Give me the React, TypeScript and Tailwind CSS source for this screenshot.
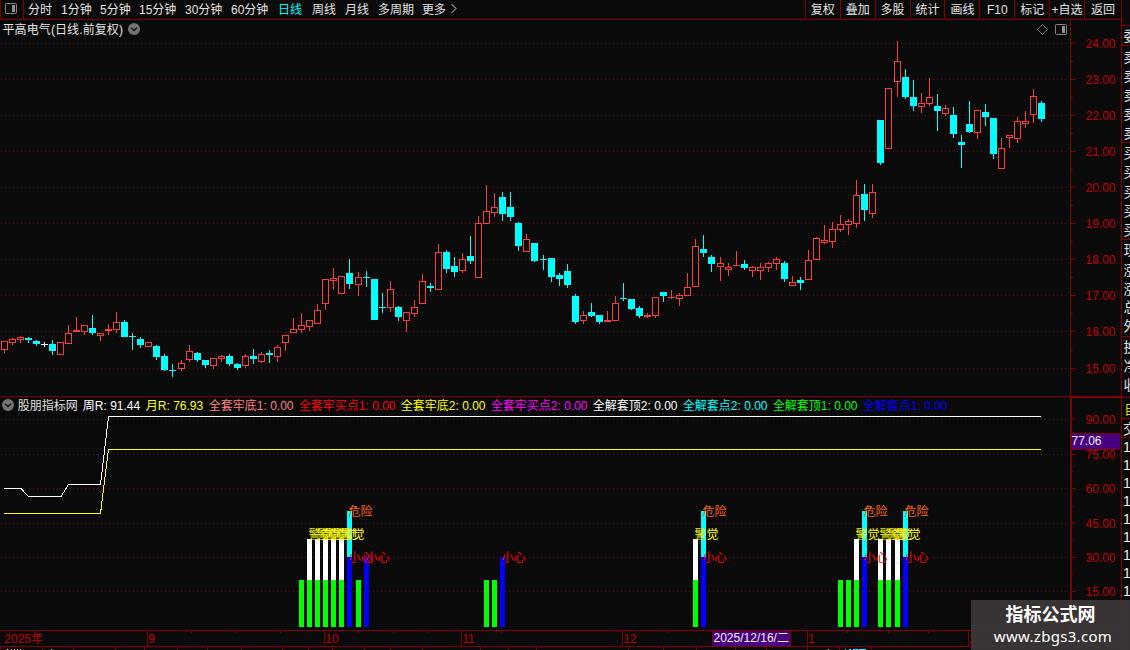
import React from "react";

type Kind = "r" | "c" | "w";
type Candle = [number, number, number, number, number, Kind];

// x centre, high, body top, body bottom, low, kind (r = rising, c = falling, w = flat)
const candles: Candle[] = [
  [4, 341, 341, 350, 353, "r"], [12, 338, 339, 343, 345, "r"], [20, 336, 337, 340, 343, "r"],
  [28, 337, 338, 340, 343, "c"], [36, 340, 341, 344, 346, "c"], [44, 342, 344, 345, 347, "w"],
  [52, 340, 344, 351, 355, "c"], [60, 342, 342, 355, 355, "r"], [68, 325, 333, 344, 344, "r"],
  [76, 317, 330, 332, 332, "r"], [84, 325, 325, 332, 335, "r"], [92, 315, 328, 333, 335, "c"],
  [100, 333, 333, 336, 341, "r"], [108, 324, 329, 331, 335, "r"], [116, 312, 322, 330, 333, "r"],
  [124, 320, 322, 337, 337, "c"], [132, 333, 336, 337, 350, "c"], [140, 337, 339, 345, 348, "c"],
  [148, 342, 342, 347, 347, "r"], [156, 345, 346, 357, 360, "c"], [164, 354, 356, 370, 371, "c"],
  [172, 364, 370, 371, 377, "c"], [181, 360, 363, 369, 371, "r"], [189, 345, 351, 360, 362, "r"],
  [197, 352, 353, 360, 362, "c"], [205, 360, 360, 365, 368, "c"], [213, 358, 358, 366, 369, "r"],
  [221, 355, 356, 359, 362, "r"], [229, 354, 356, 364, 366, "c"], [237, 363, 364, 368, 370, "c"],
  [245, 354, 356, 366, 368, "r"], [253, 349, 356, 359, 364, "c"], [261, 352, 354, 362, 363, "r"],
  [269, 350, 353, 355, 363, "c"], [277, 345, 347, 357, 362, "r"], [285, 335, 335, 343, 351, "r"],
  [293, 318, 329, 333, 333, "r"], [301, 313, 325, 330, 333, "r"], [309, 320, 320, 327, 331, "r"],
  [317, 304, 310, 324, 324, "r"], [325, 279, 279, 304, 310, "r"], [333, 268, 278, 281, 290, "r"],
  [341, 276, 276, 294, 294, "r"], [349, 259, 273, 284, 289, "c"], [358, 272, 277, 285, 296, "r"],
  [366, 271, 277, 278, 287, "c"], [374, 279, 279, 320, 320, "c"], [382, 293, 307, 308, 313, "c"],
  [390, 281, 289, 308, 312, "r"], [398, 306, 307, 317, 321, "c"], [406, 312, 312, 321, 332, "r"],
  [414, 300, 307, 314, 317, "r"], [422, 274, 281, 304, 304, "r"], [430, 283, 286, 288, 292, "c"],
  [438, 244, 252, 290, 290, "r"], [446, 250, 252, 269, 273, "c"], [454, 257, 266, 272, 277, "c"],
  [462, 253, 259, 271, 273, "r"], [470, 236, 256, 261, 264, "c"], [478, 216, 223, 278, 278, "r"],
  [486, 185, 211, 224, 224, "r"], [494, 193, 207, 213, 217, "r"], [502, 192, 197, 214, 221, "c"],
  [510, 192, 207, 217, 221, "c"], [518, 222, 223, 246, 251, "c"], [526, 234, 239, 252, 252, "r"],
  [534, 243, 243, 261, 262, "c"], [543, 255, 259, 260, 270, "c"], [551, 258, 258, 277, 282, "c"],
  [559, 273, 275, 279, 286, "c"], [567, 264, 271, 285, 288, "c"], [575, 294, 296, 322, 324, "c"],
  [583, 311, 315, 321, 324, "r"], [591, 303, 312, 316, 317, "c"], [599, 315, 315, 322, 324, "c"],
  [607, 311, 320, 322, 322, "r"], [615, 296, 303, 321, 321, "r"], [623, 283, 298, 299, 301, "c"],
  [631, 299, 299, 309, 310, "c"], [639, 306, 308, 316, 318, "c"], [647, 313, 315, 317, 318, "r"],
  [655, 297, 297, 316, 318, "r"], [663, 292, 292, 296, 302, "c"], [671, 290, 297, 298, 299, "r"],
  [679, 293, 295, 299, 306, "r"], [687, 273, 287, 296, 296, "r"], [695, 239, 246, 287, 287, "r"],
  [703, 235, 249, 253, 257, "c"], [711, 255, 257, 264, 272, "c"], [720, 257, 263, 267, 281, "r"],
  [728, 263, 267, 270, 276, "r"], [736, 251, 265, 266, 266, "r"], [744, 260, 264, 268, 270, "c"],
  [752, 266, 267, 271, 277, "r"], [760, 263, 267, 271, 280, "r"], [768, 262, 263, 268, 272, "r"],
  [776, 257, 259, 264, 270, "r"], [784, 261, 263, 279, 282, "c"], [792, 276, 282, 286, 286, "r"],
  [800, 277, 280, 283, 290, "c"], [808, 250, 260, 280, 280, "r"], [816, 237, 238, 260, 260, "r"],
  [824, 225, 240, 243, 244, "r"], [832, 222, 229, 242, 248, "r"], [840, 215, 224, 230, 232, "r"],
  [848, 219, 221, 225, 235, "r"], [856, 180, 195, 224, 228, "r"], [864, 184, 194, 210, 221, "c"],
  [872, 184, 192, 214, 218, "r"], [880, 120, 120, 163, 165, "c"], [888, 88, 88, 149, 149, "r"],
  [897, 41, 61, 82, 97, "r"], [905, 69, 77, 97, 99, "c"], [913, 80, 97, 106, 111, "c"],
  [921, 93, 103, 107, 113, "r"], [929, 78, 97, 104, 106, "r"], [937, 94, 106, 111, 131, "c"],
  [945, 105, 108, 114, 116, "r"], [953, 107, 115, 134, 138, "c"], [961, 135, 142, 145, 168, "c"],
  [969, 101, 124, 132, 133, "c"], [977, 110, 110, 133, 139, "r"], [985, 104, 112, 117, 126, "c"],
  [993, 118, 118, 154, 159, "c"], [1001, 138, 148, 169, 169, "r"], [1009, 135, 135, 138, 148, "r"],
  [1017, 117, 121, 139, 143, "r"], [1025, 111, 121, 124, 128, "r"], [1033, 89, 96, 115, 123, "r"],
  [1041, 101, 103, 119, 122, "c"],
];

const candleColor: Record<Kind, string> = { r: "#ff3c3c", c: "#00ffff", w: "#ffffff" };

const priceTicks: [number, string][] = [
  [43, "24.00"], [79, "23.00"], [115, "22.00"], [151, "21.00"], [187, "20.00"],
  [223, "19.00"], [259, "18.00"], [295, "17.00"], [331, "16.00"], [368, "15.00"],
];
const halfTicks = [61, 97, 133, 169, 205, 241, 277, 313, 350];

const indicatorTicks: [number, string][] = [
  [419, "90.00"], [454, "75.00"], [488, "60.00"], [523, "45.00"], [557, "30.00"], [591, "15.00"],
];

const LINE = "#800000";
const LABEL = "#c00000";

const periods: [string, string][] = [
  ["分时", "w-[33px]"], ["1分钟", "w-[39px]"], ["5分钟", "w-[39px]"], ["15分钟", "w-[46px]"],
  ["30分钟", "w-[46px]"], ["60分钟", "w-[47px]"], ["日线", "w-[34px] text-[#00ffff]"],
  ["周线", "w-[33px]"], ["月线", "w-[33px]"], ["多周期", "w-[44px]"], ["更多", "w-[28px]"],
];

const actions = ["复权", "叠加", "多股", "统计", "画线", "F10", "标记", "+自选"];

const legend: [string, string][] = [
  ["股朋指标网", "w-[65px] text-[#e0e0e0]"],
  ["周R: 91.44", "w-[63px] text-white"],
  ["月R: 76.93", "w-[63px] text-[#ffff00]"],
  ["全套牢底1: 0.00", "w-[90px] text-[#ff8080]"],
  ["全套牢买点1: 0.00", "w-[102px] text-[#ff0000]"],
  ["全套牢底2: 0.00", "w-[90px] text-[#ffff00]"],
  ["全套牢买点2: 0.00", "w-[102px] text-[#ff00ff]"],
  ["全解套顶2: 0.00", "w-[90px] text-white"],
  ["全解套点2: 0.00", "w-[90px] text-[#00ffff]"],
  ["全解套顶1: 0.00", "w-[90px] text-[#00ff00]"],
  ["全解套点1: 0.00", "w-[90px] text-[#0000ff]"],
];

const greenBars = [299, 307, 315, 323, 331, 339, 356, 484, 492, 693, 838, 846, 854, 878, 886, 895];
const whiteBars = [307, 315, 323, 331, 339, 693, 854, 878, 886, 895];
const cyanBars = [347, 701, 862, 903];
const blueBars = [347, 364, 500, 701, 862, 903];

function Dots({ y }: { y: number }) {
  return <line x1={1} x2={1068} y1={y + 0.5} y2={y + 0.5} stroke="#681010" strokeDasharray="1 3" />;
}

function PanelIcon({ className }: { className: string }) {
  return (
    <svg width="12" height="11" viewBox="0 0 12 11" className={className}>
      <rect x="0.5" y="0.5" width="11" height="10" rx="1" fill="none" stroke="#858585" />
      <rect x="7" y="2" width="3" height="7" fill="#909090" />
    </svg>
  );
}

function CollapseIcon() {
  return (
    <svg width="12" height="12" viewBox="0 0 12 12" className="shrink-0">
      <circle cx="6" cy="6" r="6" fill="#747474" />
      <path d="M3 4.7 L6 7.5 L9 4.7" fill="none" stroke="#151515" strokeWidth="1.4" />
    </svg>
  );
}

function Toolbar() {
  return (
    <header className="flex h-[20px] border-b border-[#800000] text-[12px] leading-[20px] text-[#e4e4e4]">
      <div className="flex h-[19px] w-[24px] shrink-0 border-x border-[#800000] pt-[3px] pl-[4px]">
        <PanelIcon className="shrink-0" />
      </div>
      <nav className="flex h-[19px] flex-1 pl-[4px]">
        {periods.map(([label, cls]) => (
          <span key={label} className={`shrink-0 ${cls}`}>{label}</span>
        ))}
        <svg width="8" height="11" viewBox="0 0 8 11" className="mt-[3px] shrink-0">
          <path d="M1.5 1 L6 5.5 L1.5 10" fill="none" stroke="#e0e0e0" />
        </svg>
      </nav>
      <div className="flex h-[19px] shrink-0">
        {actions.map((label) => (
          <span key={label} className="w-[34.9px] border-l border-[#800000] text-center">{label}</span>
        ))}
        <span className="w-[37px] border-l border-[#800000] pl-[6px]">返回</span>
      </div>
    </header>
  );
}

function PriceChart() {
  return (
    <svg width="1070" height="356" viewBox="0 40 1070 356" shapeRendering="crispEdges" className="block">
      {priceTicks.map(([y]) => <Dots key={y} y={y} />)}
      {candles.map(([x, high, top, bottom, low, kind]) => {
        const color = candleColor[kind];
        const hollow = kind === "r" && bottom - top > 2;
        return (
          <g key={x} fill={color}>
            {top > high && <rect x={x} y={high} width={1} height={top - high} />}
            {low > bottom && <rect x={x} y={bottom} width={1} height={low - bottom} />}
            {hollow ? (
              <rect x={x - 2.5} y={top + 0.5} width={6} height={bottom - top - 1} fill="#0a0a0a" stroke={color} />
            ) : (
              <rect x={x - 3} y={top} width={7} height={bottom - top} />
            )}
          </g>
        );
      })}
    </svg>
  );
}

function PriceAxis() {
  return (
    <svg width="51" height="376" viewBox="1070 20 51 376" className="block shrink-0 text-[12px]">
      <g fill={LINE} shapeRendering="crispEdges">
        <rect x={1070} y={20} width={1} height={376} />
        {priceTicks.map(([y]) => <rect key={y} x={1071} y={y} width={5} height={1} />)}
        {halfTicks.map((y) => <rect key={y} x={1071} y={y} width={2} height={1} />)}
      </g>
      {priceTicks.map(([y, t]) => <text key={t} x={1085.5} y={y + 5} fill={LABEL}>{t}</text>)}
    </svg>
  );
}

function IndicatorChart() {
  return (
    <svg width="1070" height="216" viewBox="0 414 1070 216" className="block text-[12px]">
      <g shapeRendering="crispEdges">
        {indicatorTicks.map(([y]) => <Dots key={y} y={y} />)}
        {whiteBars.map((x) => <rect key={x} x={x} y={539} width={5} height={41} fill="#ffffff" />)}
        {greenBars.map((x) => <rect key={x} x={x} y={580} width={5} height={47} fill="#00ff00" />)}
        {blueBars.map((x) => <rect key={x} x={x} y={557} width={5} height={70} fill="#0000ff" />)}
        {cyanBars.map((x) => <rect key={x} x={x} y={511} width={5} height={46} fill="#00ffff" />)}
        <polyline points="4,488.5 21,488.5 28.5,496.5 61,496.5 68.5,484.5 100.5,484.5 108.5,416.5 1041,416.5" fill="none" stroke="#ffffff" />
        <polyline points="4,513.5 100.5,513.5 108.5,449.5 1041,449.5" fill="none" stroke="#ffff00" />
      </g>
      {cyanBars.map((x) => <text key={x} x={x + 1.5} y={516} fill="#ff6600">危险</text>)}
      {blueBars.map((x) => <text key={x} x={x + 1.5} y={562} fill="#ff0000">小心</text>)}
      {whiteBars.map((x) => <text key={x} x={x + 1.5} y={539} fill="#ffff00">警觉</text>)}
    </svg>
  );
}

function IndicatorAxis() {
  return (
    <svg width="51" height="233" viewBox="1070 397 51 233" className="block shrink-0 text-[12px]">
      <g fill={LINE} shapeRendering="crispEdges">
        <rect x={1070} y={397} width={2} height={233} />
        <rect x={1070} y={397} width={51} height={1} />
        {indicatorTicks.map(([y]) => <rect key={y} x={1072} y={y} width={4} height={1} />)}
        {[471, 506, 540, 574].map((y) => <rect key={y} x={1072} y={y} width={1} height={1} />)}
      </g>
      {indicatorTicks.map(([y, t]) => <text key={t} x={1085.5} y={y + 5} fill={LABEL}>{t}</text>)}
      <g shapeRendering="crispEdges">
        <rect x={1072} y={433} width={48} height={17} fill="#480080" />
        <rect x={1072} y={433} width={48} height={1} fill={LINE} />
        <rect x={1072} y={449} width={48} height={1} fill={LINE} />
      </g>
      <text x={1071.5} y={445} fill="#f0f0f0">77.06</text>
    </svg>
  );
}

const months: [number, string][] = [[147, "9"], [324, "10"], [461, "11"], [622, "12"], [807, "1"], [968, "2"]];
const weekTicks = [191, 236, 280, 358, 393, 427, 501, 668, 847, 888, 928];
const tabTicks = [0, 42, 73, 115, 144, 177, 207, 241, 282, 308, 332, 364, 390, 422, 480, 508, 536, 628, 663, 696, 735, 766, 807, 839, 871];

function Timeline() {
  return (
    <svg width="1121" height="20" viewBox="0 630 1121 20" className="block text-[12px]">
      <g fill={LINE} shapeRendering="crispEdges">
        <rect x={0} y={630} width={1121} height={1} />
        <rect x={0} y={646} width={1121} height={1} />
        {months.map(([x]) => <rect key={x} x={x} y={630} width={1} height={17} />)}
        {weekTicks.map((x) => <rect key={x} x={x} y={631} width={1} height={2} />)}
        {tabTicks.map((x) => <rect key={x} x={x} y={647} width={1} height={3} />)}
        <rect x={712} y={630} width={79} height={17} />
        <rect x={713} y={631} width={77} height={15} fill="#480080" />
      </g>
      <g shapeRendering="crispEdges">
        {[7, 11, 14, 17, 20, 51, 828].map((x) => <rect key={x} x={x} y={649} width={1} height={1} fill="#e0e0e0" />)}
        {[[845, 1], [849, 2], [853, 5], [859, 7]].map(([x, w]) => (
          <rect key={x} x={x} y={649} width={w} height={1} fill="#00ffff" />
        ))}
      </g>
      <text x={4.3} y={643} fill={LABEL}>2025年</text>
      {months.map(([x, t]) => <text key={t} x={x + 1.3} y={643} fill={LABEL}>{t}</text>)}
      <text x={713.5} y={642} fill="#f0f0f0">2025/12/16/二</text>
    </svg>
  );
}

const sideTop: [number, string][] = [
  [41, "委"], [62, "卖"], [81, "卖"], [100, "卖"], [119, "卖"], [138, "卖"],
  [158, "买"], [177, "买"], [197, "买"], [216, "买"], [235, "买"],
  [255, "现"], [275, "涨"], [294, "涨"], [312, "总"], [331, "外"],
  [352, "换"], [371, "净"], [390, "收"],
];

function SidePanel() {
  return (
    <svg width="9" height="650" viewBox="1121 0 9 650" className="block shrink-0 text-[14px]">
      <g fill={LINE} shapeRendering="crispEdges">
        <rect x={1121} y={0} width={1} height={650} />
        <rect x={1120} y={397} width={2} height={253} />
        {[25, 45, 142, 239, 336, 397, 418, 437].map((y) => <rect key={y} x={1121} y={y} width={9} height={1} />)}
      </g>
      {sideTop.map(([y, t]) => <text key={y} x={1123.5} y={y} fill="#e0e0e0">{t}</text>)}
      <text x={1124} y={414} fill="#d8d800">自</text>
      <text x={1123} y={434} fill="#e0e0e0">交</text>
      {[452, 470, 488, 506, 524, 542, 560, 578, 596].map((y) => (
        <text key={y} x={1123} y={y} fill="#f0f0f0">1</text>
      ))}
    </svg>
  );
}

export default function App() {
  return (
    <div className="relative flex h-[650px] w-[1130px] overflow-hidden bg-[#0a0a0a] font-['Liberation_Sans','Noto_Sans_CJK_SC',sans-serif] whitespace-nowrap">
      <main className="flex w-[1121px] shrink-0 flex-col">
        <Toolbar />
        <section className="flex h-[376px]">
          <div className="flex w-[1070px] flex-col">
            <div className="flex h-[20px] items-start gap-[5px] pl-[2.5px] text-[12px] leading-[20px] text-[#e4e4e4]">
              <h1 className="w-[120px] tracking-[0.1px]">平高电气(日线.前复权)</h1>
              <div className="pt-[3px] leading-none"><CollapseIcon /></div>
              <div className="ml-auto flex items-start gap-[7px] pt-[4px] pr-[3px]">
                <svg width="11" height="11" viewBox="0 0 11 11">
                  <path d="M5.5 0.5 L10.5 5.5 L5.5 10.5 L0.5 5.5 Z" fill="none" stroke="#747474" />
                </svg>
                <PanelIcon className="shrink-0" />
              </div>
            </div>
            <PriceChart />
          </div>
          <PriceAxis />
        </section>
        <div className="h-px bg-[#800000]" />
        <section className="flex h-[233px]">
          <div className="flex w-[1070px] flex-col">
            <div className="flex h-[17px] items-start pl-[2px] text-[12px] leading-[18px]">
              <div className="w-[15.8px] shrink-0 pt-[2px] leading-none"><CollapseIcon /></div>
              {legend.map(([label, cls]) => (
                <span key={label} className={`shrink-0 ${cls}`}>{label}</span>
              ))}
            </div>
            <IndicatorChart />
          </div>
          <IndicatorAxis />
        </section>
        <Timeline />
      </main>
      <SidePanel />
      <div className="absolute right-0 bottom-0 flex h-[50px] w-[159px] flex-col items-center bg-[#3b3637]/95 pt-[4px] text-white">
        <strong className="text-[18px] leading-[23px] font-bold">指标公式网</strong>
        <span className="pl-[5px] font-['Noto_Sans','Open_Sans',sans-serif] text-[15px] leading-[18px] tracking-[0.3px]">www.zbgs3.com</span>
      </div>
    </div>
  );
}
